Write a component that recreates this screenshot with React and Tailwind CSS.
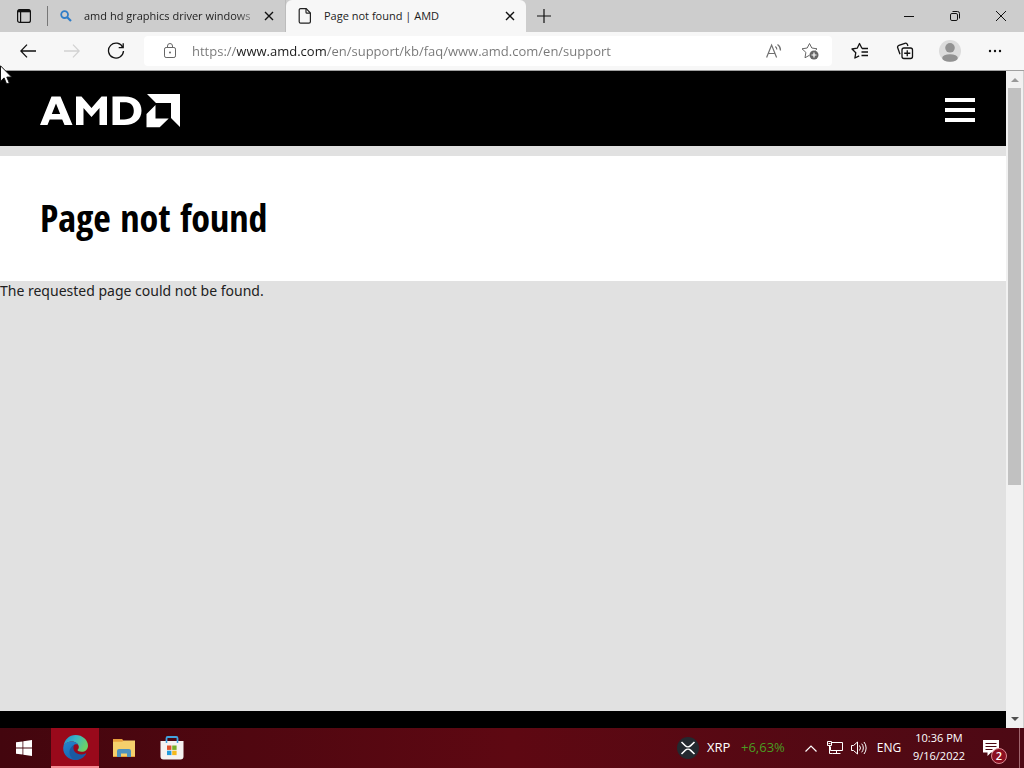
import React, { useState } from 'react';

const IconButton = ({ label, className = '', children }) => (
  <button type="button" aria-label={label} className={`flex shrink-0 items-center justify-center ${className}`}>
    {children}
  </button>
);

const CloseIcon = () => (
  <svg width="10" height="10" viewBox="0 0 10 10" fill="none" stroke="#111" strokeWidth="1.4">
    <path d="M1 1l8 8M9 1l-8 8" />
  </svg>
);

const TabStrip = () => (
  <div className="flex h-8 items-stretch bg-[#cdcdcd]">
    <IconButton label="Tab actions menu" className="w-[47px]">
      <svg width="16" height="16" viewBox="0 0 16 16" fill="none" stroke="#111" strokeWidth="1.2">
        <rect x="1.6" y="1.6" width="12.8" height="12.8" rx="2" />
        <path d="M2 3h12" strokeWidth="2.6" />
        <path d="M4.6 4v10" />
      </svg>
    </IconButton>
    <div className="h-5 w-px self-center bg-[#777]" />
    <div className="flex w-[238px] items-center border-r border-[#bcbcbc] pr-2 pl-3">
      <svg className="shrink-0" width="12" height="12" viewBox="0 0 12 12" fill="none" stroke="#2f7dc8">
        <circle cx="4.6" cy="4.6" r="3.4" strokeWidth="1.8" />
        <path d="M7.2 7.2l3.8 3.8" strokeWidth="2.2" />
      </svg>
      <a
        href="#search"
        className="ml-3 min-w-0 flex-1 overflow-hidden bg-linear-to-r from-[#1c1c1c] from-85% to-[#cdcdcd] bg-clip-text text-[11px] leading-4 whitespace-nowrap text-transparent"
      >
        amd hd graphics driver windows
      </a>
      <IconButton label="Close amd hd graphics driver windows" className="h-4 w-4">
        <CloseIcon />
      </IconButton>
    </div>
    <div className="flex w-60 items-center rounded-t-md bg-[#f7f7f7] pr-2 pl-3">
      <svg className="shrink-0" width="14" height="18" viewBox="0 0 14 18" fill="none" stroke="#222" strokeWidth="1.2">
        <path d="M2.6 1.6h5.6l4.2 4.4v8.8a1.4 1.4 0 0 1-1.4 1.4H2.6a1.4 1.4 0 0 1-1.4-1.4V3a1.4 1.4 0 0 1 1.4-1.4z" />
        <path d="M8 1.8v3.4a1 1 0 0 0 1 1h3.2" />
      </svg>
      <a href="#page" className="ml-3 flex-1 text-[11px] leading-4 whitespace-nowrap text-[#1c1c1c]">
        Page not found | AMD
      </a>
      <IconButton label="Close Page not found" className="h-4 w-4">
        <CloseIcon />
      </IconButton>
    </div>
    <IconButton label="New tab" className="w-9">
      <svg width="14" height="14" viewBox="0 0 14 14" stroke="#111" strokeWidth="1.2">
        <path d="M7 0v14M0 7h14" />
      </svg>
    </IconButton>
    <div className="flex-1" />
    <IconButton label="Minimize" className="w-[46px]">
      <svg width="10" height="10" viewBox="0 0 10 10" stroke="#111">
        <path d="M0 5.5h10" />
      </svg>
    </IconButton>
    <IconButton label="Restore" className="w-[46px]">
      <svg width="10" height="10" viewBox="0 0 10 10" fill="none" stroke="#111">
        <rect x="0.5" y="2.5" width="7" height="7" rx="1.4" />
        <path d="M2.5 .5h5a2 2 0 0 1 2 2v5" />
      </svg>
    </IconButton>
    <IconButton label="Close window" className="w-[46px]">
      <svg width="12" height="12" viewBox="0 0 12 12" stroke="#111">
        <path d="M1 1l10 10M11 1L1 11" />
      </svg>
    </IconButton>
  </div>
);

const Toolbar = () => {
  const [url, setUrl] = useState('https://www.amd.com/en/support/kb/faq/www.amd.com/en/support');

  return (
    <div className="flex h-[39px] items-center border-b border-[#a0a0a0] bg-[#f7f7f7] pr-[7px] pl-1.5">
      <IconButton label="Back" className="h-8 w-11">
        <svg width="16" height="14" viewBox="0 0 16 14" fill="none" stroke="#111" strokeWidth="1.3">
          <path d="M7 .6L.8 7 7 13.4M.8 7H16" />
        </svg>
      </IconButton>
      <IconButton label="Forward" className="h-8 w-11">
        <svg width="16" height="14" viewBox="0 0 16 14" fill="none" stroke="#d2d2d2" strokeWidth="1.3">
          <path d="M9 .6L15.2 7 9 13.4M15.2 7H0" />
        </svg>
      </IconButton>
      <IconButton label="Refresh" className="h-8 w-11">
        <svg width="18" height="18" viewBox="0 0 18 18" fill="none" stroke="#111" strokeWidth="1.3">
          <path d="M15.8 5.4A7.5 7.5 0 1 0 16.5 9" />
          <path d="M16.2 1.2v4.5h-4.5" />
        </svg>
      </IconButton>
      <form className="ml-1.5 flex h-[30px] flex-1 items-center rounded-sm bg-white pl-4" onSubmit={(e) => e.preventDefault()}>
        <IconButton label="View site information" className="w-5">
          <svg width="14" height="16" viewBox="0 0 14 16" fill="none" stroke="#666">
            <rect x="1.5" y="4.5" width="11" height="10" rx="1.6" />
            <path d="M4.5 4.5V3a2.5 2.5 0 0 1 5 0v1.5" />
            <circle cx="7" cy="9.5" r=".9" fill="#555" stroke="none" />
          </svg>
        </IconButton>
        <input
          type="text"
          aria-label="Address and search bar"
          value={url}
          onChange={(e) => setUrl(e.target.value)}
          className="ml-3 min-w-0 flex-1 bg-[linear-gradient(to_right,#767676_45px,#1a1a1a_45px,#1a1a1a_135px,#767676_135px)] bg-clip-text text-[13px] leading-5 text-transparent outline-none"
        />
        <IconButton label="Read aloud" className="h-7 w-9">
          <svg width="16" height="16" viewBox="0 0 16 16" fill="none" stroke="#707070" strokeWidth="1.2">
            <path d="M.6 14.5L5.6 2l5 12.5M2.2 10.5h6.8" />
            <path d="M9.3 3.6a3.5 3.5 0 0 1 1.5 3M11.5 1.5a7 7 0 0 1 3 6" />
          </svg>
        </IconButton>
        <IconButton label="Add to favorites" className="mr-1 h-7 w-9">
          <svg width="18" height="18" viewBox="0 0 18 18" fill="none" stroke="#666" strokeLinejoin="round">
            <path d="M8.5 13.2L4 15.8l.9-5.4L1 6.8l5.2-.8L8.5 1.5l2.3 4.5 5.2.8-1.4 1.4" />
            <circle cx="13" cy="13" r="4.5" fill="#666" stroke="none" />
            <path d="M13 10.5v5M10.5 13h5" stroke="#fff" strokeWidth="1.2" />
          </svg>
        </IconButton>
      </form>
      <div className="flex pl-[5px]">
        <IconButton label="Favorites" className="h-8 w-[45px]">
          <svg width="18" height="18" viewBox="0 0 18 18" fill="none" stroke="#111" strokeWidth="1.3" strokeLinejoin="round">
            <path d="M11 6.5L8.5 1.5 6.2 6.2 1 7l3.8 3.7-.9 5.3 4.3-2.200" />
            <path d="M11 6.5h6M10.5 10H17M10.5 13.5H17" />
          </svg>
        </IconButton>
        <IconButton label="Collections" className="h-8 w-[45px]">
          <svg width="18" height="18" viewBox="0 0 18 18" fill="none" stroke="#111" strokeWidth="1.3">
            <rect x="6" y="6" width="10.5" height="10.5" rx="2" />
            <path d="M11.25 8.2v6.1M8.2 11.25h6.1" />
            <path d="M4 12.3L1.7 5.8a2 2 0 0 1 1.2-2.5l6-2a2 2 0 0 1 2.5 1.2l.5 1.5" />
          </svg>
        </IconButton>
        <IconButton label="Profile" className="h-8 w-[45px]">
          <svg width="22" height="22" viewBox="0 0 22 22">
            <circle cx="11" cy="11" r="11" fill="#dcdcdc" />
            <circle cx="11" cy="7.8" r="4.8" fill="#929292" />
            <ellipse cx="11" cy="18" rx="7.8" ry="3.8" fill="#929292" />
          </svg>
        </IconButton>
        <IconButton label="Settings and more" className="h-8 w-[45px]">
          <svg width="14" height="4" viewBox="0 0 14 4" fill="#111">
            <circle cx="2" cy="2" r="1.2" />
            <circle cx="7" cy="2" r="1.2" />
            <circle cx="12" cy="2" r="1.2" />
          </svg>
        </IconButton>
      </div>
    </div>
  );
};

const AmdLogo = () => (
  <svg width="141" height="34" viewBox="0 0 141 34" fill="#fff" role="img" aria-label="AMD">
    <path fillRule="evenodd" d="M11.5 2.5h9L32.5 31h-8l-2.300-5.500H9.700L7.500 31H0zM16 9.500l-4.200 10.500h8.400z" />
    <path d="M36 2.5h5.5L51.500 14 61.500 2.500H67V31h-7.500V14L51.500 23 43.500 14v17H36z" />
    <path fillRule="evenodd" d="M72.500 2.500H84c12 0 17.500 5.800 17.500 14.200C101.500 25 95 31 84.500 31h-12zM80 8.300v17.200h4c6.500 0 9.800-3.200 9.800-8.700 0-6-3.600-8.500-9.800-8.500z" />
    <path d="M107 0h33v33l-9-9V9h-15z" />
    <path d="M115.500 11v13.500h13.200l-9 8.800H106.500V20z" />
  </svg>
);

const WebPage = () => (
  <main className="flex min-w-0 flex-1 flex-col bg-[#e1e1e1]">
    <header className="flex h-[75px] shrink-0 items-center justify-between bg-black pt-[3px] pr-[31px] pl-10">
      <a href="#home" className="pt-0.5">
        <AmdLogo />
      </a>
      <button type="button" aria-label="Toggle navigation" className="flex w-[30px] flex-col gap-1.5">
        <span className="h-1 bg-white" />
        <span className="h-1 bg-white" />
        <span className="h-1 bg-white" />
      </button>
    </header>
    <section className="mt-2.5 flex h-[125px] shrink-0 items-center bg-white px-10 pb-1">
      <h1 className="font-['Noto_Sans_ExtraCondensed','Open_Sans_Condensed','Roboto_Condensed',sans-serif] text-[38px] leading-[48px] font-semibold text-black">
        Page not found
      </h1>
    </section>
    <p className="font-['Noto_Sans',sans-serif] text-[14px] leading-5 text-[#222]">The requested page could not be found.</p>
    <footer className="mt-auto h-[17px] bg-black" />
  </main>
);

const Scrollbar = () => (
  <div className="flex w-[18px] shrink-0 flex-col items-center border-r border-[#d0d0d0] bg-[#f1f1f1]">
    <IconButton label="Scroll up" className="h-[17px] w-full">
      <svg width="8" height="5" viewBox="0 0 8 5" fill="#999">
        <path d="M0 5l4-4 4 4z" />
      </svg>
    </IconButton>
    <div className="flex w-full flex-1 flex-col items-center">
      <div className="h-[397px] max-h-full w-[13px] bg-[#c1c1c1]" />
    </div>
    <IconButton label="Scroll down" className="h-[17px] w-full">
      <svg width="8" height="5" viewBox="0 0 8 5" fill="#505050">
        <path d="M0 0l4 4 4-4z" />
      </svg>
    </IconButton>
  </div>
);

const EdgeIcon = () => (
  <svg width="25" height="25" viewBox="0 0 24 24">
    <defs>
      <linearGradient id="edgeTop" x1="0" y1="0" x2="1" y2="0.4">
        <stop offset="0" stopColor="#2387c8" />
        <stop offset="0.5" stopColor="#38b5c8" />
        <stop offset="1" stopColor="#6bd068" />
      </linearGradient>
      <linearGradient id="edgeSide" x1="0" y1="0" x2="0.5" y2="1">
        <stop offset="0" stopColor="#2585cc" />
        <stop offset="1" stopColor="#1765b0" />
      </linearGradient>
    </defs>
    <path d="M.5 11C1.2 4.5 6 0 12 0c6.8 0 12 4.8 12 10.3 0 3.7-2.8 5.8-6 5.8-2.6 0-4-.9-4-1.7 0-.7 1.2-1 1.2-3 0-2.6-3-5.2-6.7-5.2C4.500 6.200 1.500 8.500.5 11z" fill="url(#edgeTop)" />
    <path d="M.2 12.500C.5 8.500 4 6.200 8.500 6.200c3 0 5.200 1.300 6.200 3-1.200-.6-2.500-.5-3.500 0-2 1-3 3.200-2.600 5.600.6 4 4.800 7 9.800 6.300C15.800 23.300 13.800 24 12 24 5.400 24 0 18.900.2 12.500z" fill="url(#edgeSide)" />
    <path d="M11.200 9.200c-2.500 1.200-5 3.800-5 7.300 0 3.500 2.500 6.700 5.800 7.500 4.500 0 8.300-2.600 10.200-5.800.2-.4-.2-.7-.6-.5-4.600 2.200-10.700.5-11.500-4.200-.3-1.900.2-3.300 1.100-4.300z" fill="#1a5aa2" />
  </svg>
);

const Taskbar = () => (
  <footer className="flex h-10 shrink-0 items-stretch bg-linear-to-r from-[#43060e] via-[#5e0812] to-[#4d0914] text-white">
    <IconButton label="Start" className="w-12">
      <svg width="16" height="16" viewBox="0 0 16 16" fill="#fff">
        <path d="M0 2.300l6.500-.9v6.200H0zM7.300 1.300L16 0v7.600H7.300zM0 8.400h6.500v6.200L0 13.700zM7.300 8.400H16V16l-8.700-1.300z" />
      </svg>
    </IconButton>
    <IconButton label="Microsoft Edge" className="ml-[3px] w-12 border-b-2 border-[#f58b94] bg-[#99091b]">
      <EdgeIcon />
    </IconButton>
    <IconButton label="File Explorer" className="w-[49px]">
      <svg width="22" height="18" viewBox="0 0 22 18">
        <path d="M0 0h9l2 2h11v16H0z" fill="#e9a03d" />
        <path d="M0 2.800h9l2-1.200h11V17H0z" fill="#f5cf6c" />
        <path d="M4 18v-6a2 2 0 0 1 2-2h10a2 2 0 0 1 2 2v6h-4v-3.500H8V18z" fill="#4d92bf" />
      </svg>
    </IconButton>
    <IconButton label="Microsoft Store" className="w-12">
      <svg width="24" height="24" viewBox="0 0 24 24">
        <path d="M6.500 6V2.200A1.200 1.200 0 0 1 7.700 1h8.600a1.200 1.200 0 0 1 1.200 1.200V6" fill="none" stroke="#42a3df" strokeWidth="1.8" />
        <path d="M.5 5h23v15.500a3 3 0 0 1-3 3h-17a3 3 0 0 1-3-3z" fill="#f5f2f1" />
        <path d="M7 9.500h4.400v4.400H7z" fill="#e0502c" />
        <path d="M12.200 9.500h4.400v4.400h-4.400z" fill="#78b028" />
        <path d="M7 14.700h4.400v4.400H7z" fill="#219bdd" />
        <path d="M12.200 14.700h4.400v4.400h-4.400z" fill="#f5b91b" />
        <path d="M6.500 5v2M17.500 5v2" stroke="#42a3df" strokeWidth="1.5" />
      </svg>
    </IconButton>
    <div className="flex-1" />
    <a href="#xrp" className="flex items-center text-[13px]">
      <svg width="22" height="22" viewBox="0 0 22 22">
        <circle cx="11" cy="11" r="11" fill="#23292f" />
        <path
          d="M4.500 5l3.800 3.700a3.900 3.900 0 0 0 5.400 0L17.500 5M4.500 17l3.800-3.700a3.900 3.900 0 0 1 5.400 0l3.800 3.700"
          fill="none"
          stroke="#fff"
          strokeWidth="1.6"
        />
      </svg>
      <span className="ml-2 w-[34px]">XRP</span>
      <span className="w-12 text-[#4a9d22]">+6,63%</span>
    </a>
    <IconButton label="Show hidden icons" className="ml-2.5 w-6">
      <svg width="12" height="7" viewBox="0 0 12 7" fill="none" stroke="#fff" strokeWidth="1.2">
        <path d="M.5 6.500L6 1l5.500 5.500" />
      </svg>
    </IconButton>
    <IconButton label="Network" className="w-6">
      <svg width="18" height="16" viewBox="0 0 18 16" fill="none" stroke="#fff">
        <path d="M5.500 2.500h11v8h-12v-4M10.500 10.500v3M6.500 13.500h8" />
        <path d="M1.500 1.500h4v4h-4zM3.500 5.500v8h3M2.500 3.500h2" />
      </svg>
    </IconButton>
    <IconButton label="Volume" className="w-6">
      <svg width="18" height="14" viewBox="0 0 18 14" fill="none" stroke="#fff">
        <path d="M1.500 4.500h2l4-3.500v12l-4-3.500h-2z" />
        <path d="M9.500 4.500a4 4 0 0 1 0 5M11.700 2.700a6.500 6.500 0 0 1 0 8.600M14 1a9.500 9.500 0 0 1 0 12" />
      </svg>
    </IconButton>
    <button type="button" aria-label="Input language" className="w-9 text-[12px]">
      ENG
    </button>
    <button type="button" aria-label="Clock" className="flex w-16 flex-col items-center justify-center pb-0.5 text-[11px] leading-[18px]">
      <span>10:36 PM</span>
      <span>9/16/2022</span>
    </button>
    <IconButton label="Notifications" className="relative ml-2 w-10">
      <svg className="mr-4" width="16" height="16" viewBox="0 0 16 16">
        <path d="M0 0h16v12.500H8L4.500 16v-3.500H0z" fill="#fff" />
        <path d="M2.500 3.500h11M2.500 6.500h11M2.500 9.500h7" stroke="#4c0812" />
      </svg>
      <span className="absolute right-3 bottom-1 flex h-4 w-4 items-center justify-center rounded-full border border-[#d98b94] bg-[#8c1022] text-[11px] leading-3 font-semibold">
        2
      </span>
    </IconButton>
    <button type="button" aria-label="Show desktop" className="w-[5px] border-l border-[#a0666e]" />
  </footer>
);

const App = () => (
  <div className="relative flex h-screen flex-col overflow-hidden font-['Open_Sans','Noto_Sans',sans-serif]">
    <TabStrip />
    <Toolbar />
    <div className="flex min-h-0 flex-1">
      <WebPage />
      <Scrollbar />
    </div>
    <Taskbar />
    <svg className="pointer-events-none absolute top-[65px] left-0" width="12" height="20" viewBox="0 0 12 20">
      <path d="M.5 .8v15.500l3.600-3.400L6.600 19l2.700-1.100-2.500-5.800h4.900z" fill="#fff" stroke="#111" />
    </svg>
  </div>
);

export default App;
